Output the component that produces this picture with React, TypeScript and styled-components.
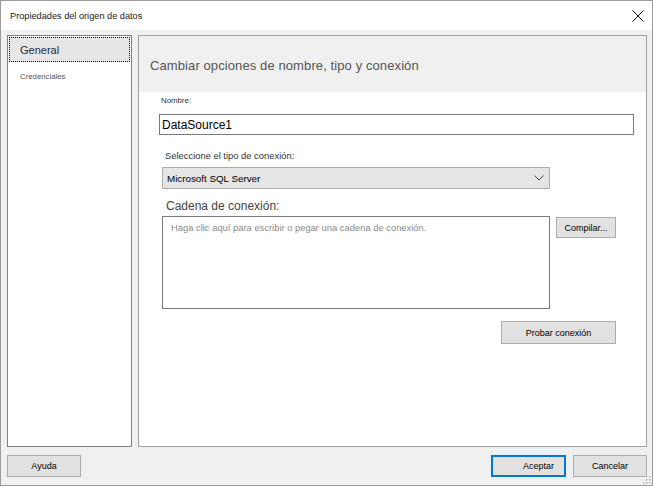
import React from 'react'
import styled, { createGlobalStyle } from 'styled-components'

const GlobalStyle = createGlobalStyle`
  html, body {
    margin: 0;
    padding: 0;
    background: #ffffff;
  }
  * {
    box-sizing: border-box;
  }
`

const Window = styled.div`
  position: relative;
  width: 653px;
  height: 486px;
  border: 1px solid #9a9a9a;
  display: flex;
  flex-direction: column;
  font-family: 'Liberation Sans', Arial, sans-serif;
  color: #000;
`

const TitleBar = styled.div`
  height: 29px;
  background: #fff;
  display: flex;
  align-items: center;
  justify-content: space-between;
  padding: 0 7px 0 9px;
`

const Title = styled.span`
  font-size: 9.2px;
  color: #222;
`

const CloseButton = styled.button`
  width: 14px;
  height: 14px;
  padding: 0;
  border: none;
  background: transparent;
  display: flex;
  align-items: center;
  justify-content: center;
`

const Body = styled.div`
  flex: 1;
  background: #f0f0f0;
  padding: 5px 5px 0 6px;
  display: flex;
  flex-direction: column;
`

const Panels = styled.div`
  display: flex;
  gap: 6px;
  height: 412px;
`

const NavPanel = styled.div`
  width: 125px;
  border: 1px solid #828282;
  background: #fff;
  padding: 1px;
  display: flex;
  flex-direction: column;
`

const NavItem = styled.div<{ $active?: boolean }>`
  height: ${(p) => (p.$active ? '25px' : '24px')};
  display: flex;
  align-items: center;
  padding-left: 10px;
  background: ${(p) => (p.$active ? '#e6e6e6' : 'transparent')};
  border: 1px dotted ${(p) => (p.$active ? '#000' : 'transparent')};
  font-size: ${(p) => (p.$active ? '11px' : '7.8px')};
  color: ${(p) => (p.$active ? '#1e2a44' : '#555')};
  margin-bottom: 2px;
`

const MainPanel = styled.div`
  flex: 1;
  border: 1px solid #a0a0a0;
  background: #fff;
  display: flex;
  flex-direction: column;
`

const Header = styled.div`
  height: 56px;
  background: #f0f0f0;
  display: flex;
  align-items: center;
  padding: 2px 0 0 11px;
  font-size: 13px;
  color: #555;
  letter-spacing: 0.1px;
`

const Content = styled.div`
  padding-left: 20px;
  display: flex;
  flex-direction: column;
  align-items: flex-start;
`

const Label = styled.div<{ $size: number; $top: number; $indent: number; $color?: string }>`
  font-size: ${(p) => p.$size}px;
  line-height: 12px;
  height: 12px;
  margin-top: ${(p) => p.$top}px;
  padding-left: ${(p) => p.$indent}px;
  color: ${(p) => p.$color || '#333'};
`

const TextInput = styled.div`
  margin-top: 7px;
  width: 475px;
  height: 21px;
  border: 1px solid #7a7a7a;
  display: flex;
  align-items: center;
  padding-left: 2px;
  font-size: 12px;
  color: #000;
`

const Select = styled.div`
  margin-top: 5px;
  margin-left: 3px;
  width: 388px;
  height: 22px;
  background: #e5e5e5;
  border: 1px solid #adadad;
  display: flex;
  align-items: center;
  justify-content: space-between;
  padding: 0 5px 0 4px;
  font-size: 9.8px;
  color: #000;
`

const ConnGroup = styled.div`
  margin-top: 4px;
  margin-left: 3px;
  width: 454px;
  display: flex;
  flex-direction: column;
`

const ConnRow = styled.div`
  display: flex;
  align-items: flex-start;
  gap: 6px;
`

const TextArea = styled.div`
  width: 388px;
  height: 93px;
  border: 1px solid #7a7a7a;
  background: #fff;
  padding: 5px 0 0 8px;
  font-size: 9.4px;
  color: #8a8a8a;
`

const Button = styled.button<{ $w: number; $h?: number; $primary?: boolean }>`
  width: ${(p) => p.$w}px;
  height: ${(p) => p.$h || 22}px;
  background: #e1e1e1;
  border: ${(p) => (p.$primary ? '2px solid #0078d7' : '1px solid #adadad')};
  font-family: 'Liberation Sans', Arial, sans-serif;
  font-size: 9px;
  color: #000;
  padding: ${(p) => (p.$primary ? '0 0 0 20px' : '0')};
  display: flex;
  align-items: center;
  justify-content: center;
`

const TestButton = styled(Button)`
  margin-top: 12px;
  align-self: flex-end;
`

const CompileButton = styled(Button)`
  margin-top: 1px;
`

const Footer = styled.div`
  margin-top: 8px;
  display: flex;
  justify-content: space-between;
`

const FooterRight = styled.div`
  display: flex;
  gap: 7px;
`

const Grip = styled.svg`
  position: absolute;
  right: 1px;
  bottom: 1px;
`

const Chevron = () => (
  <svg width="10" height="6" viewBox="0 0 10 6">
    <path d="M0.5 0.5 L5 5 L9.5 0.5" fill="none" stroke="#444" strokeWidth="1" />
  </svg>
)

const CloseIcon = () => (
  <svg width="12" height="12" viewBox="0 0 12 12">
    <path d="M0.5 0.5 L11.5 11.5 M11.5 0.5 L0.5 11.5" stroke="#111" strokeWidth="1" />
  </svg>
)

const App: React.FC = () => {
  return (
    <>
      <GlobalStyle />
      <Window>
        <TitleBar>
          <Title>Propiedades del origen de datos</Title>
          <CloseButton>
            <CloseIcon />
          </CloseButton>
        </TitleBar>
        <Body>
          <Panels>
            <NavPanel>
              <NavItem $active>General</NavItem>
              <NavItem>Credenciales</NavItem>
            </NavPanel>
            <MainPanel>
              <Header>Cambiar opciones de nombre, tipo y conexión</Header>
              <Content>
                <Label $size={7.8} $top={3} $indent={2}>Nombre:</Label>
                <TextInput>DataSource1</TextInput>
                <Label $size={9.4} $top={15} $indent={6}>Seleccione el tipo de conexión:</Label>
                <Select>
                  <span>Microsoft SQL Server</span>
                  <Chevron />
                </Select>
                <Label $size={12} $top={11} $indent={7} $color="#444">Cadena de conexión:</Label>
                <ConnGroup>
                  <ConnRow>
                    <TextArea>Haga clic aquí para escribir o pegar una cadena de conexión.</TextArea>
                    <CompileButton $w={60} $h={21}>Compilar...</CompileButton>
                  </ConnRow>
                  <TestButton $w={115} $h={23}>Probar conexión</TestButton>
                </ConnGroup>
              </Content>
            </MainPanel>
          </Panels>
          <Footer>
            <Button $w={74}>Ayuda</Button>
            <FooterRight>
              <Button $w={75} $primary>Aceptar</Button>
              <Button $w={74}>Cancelar</Button>
            </FooterRight>
          </Footer>
        </Body>
        <Grip width="10" height="10" viewBox="0 0 10 10">
          {[
            [8, 0], [8, 3], [5, 3], [8, 6], [5, 6], [2, 6],
          ].map(([x, y]) => (
            <rect key={`${x}-${y}`} x={x} y={y + 2} width="1.5" height="1.5" fill="#b8b8b8" />
          ))}
        </Grip>
      </Window>
    </>
  )
}

export default App
